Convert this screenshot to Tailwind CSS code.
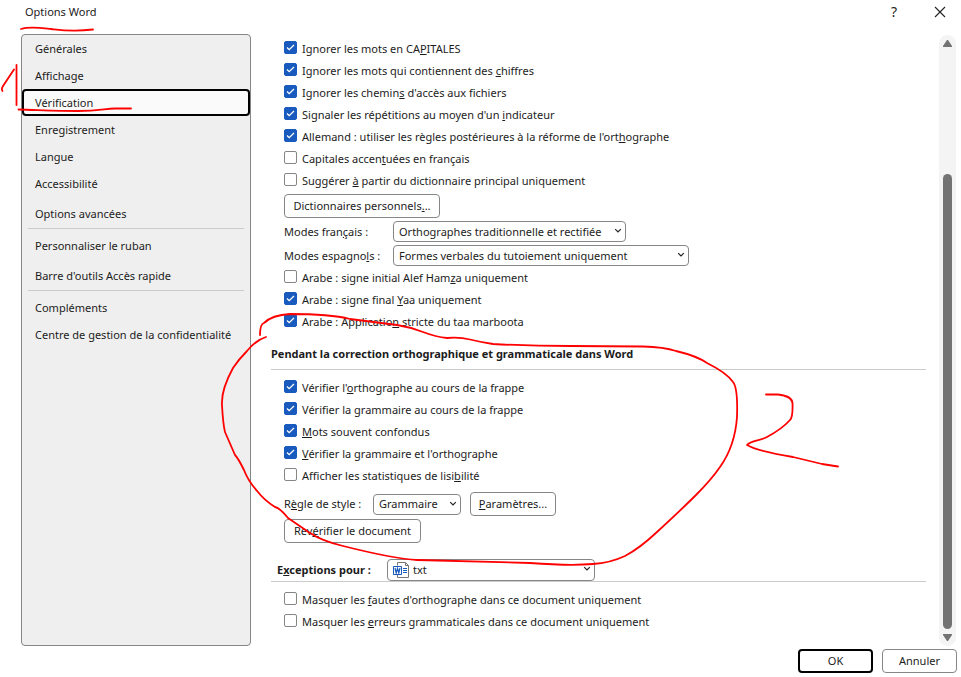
<!DOCTYPE html>
<html lang="fr">
<head>
    <meta charset="UTF-8">
    <meta name="viewport" content="width=device-width, initial-scale=1.0">
    <title>Options Word</title>
    <script src="https://cdn.jsdelivr.net/npm/@tailwindcss/browser@4"></script>
</head>
<body class="relative min-h-screen flex flex-col bg-white font-['Noto_Sans','Open_Sans',sans-serif] text-[11px] leading-4 text-[#1c1c1c]">
    <!-- Barre de titre -->
    <header class="flex items-center justify-between h-6 pl-[25px] pr-[15px] mb-[10px]">
        <h1>Options Word</h1>
        <div class="flex items-center gap-8">
            <button type="button" aria-label="Aide" class="w-4 text-sm">?</button>
            <button type="button" aria-label="Fermer">
                <svg class="w-3 h-3" viewBox="0 0 12 12" fill="none" stroke="#222" stroke-width="1.1"><path d="M1 1l10 10M11 1L1 11"/></svg>
            </button>
        </div>
    </header>

    <main class="flex flex-1 pl-[21px] pr-[5px]">
        <!-- Menu des catégories -->
        <nav class="w-[230px] shrink-0 flex flex-col border border-[#868686] rounded bg-[#efefef]">
            <a href="#" class="h-[27px] px-[13px] flex items-center">Générales</a>
            <a href="#" class="h-[27px] px-[13px] flex items-center">Affichage</a>
            <a href="#" aria-current="page" class="h-[27px] px-[11px] flex items-center bg-[#fafafa] border-2 border-black rounded">Vérification</a>
            <a href="#" class="h-[27px] px-[13px] flex items-center">Enregistrement</a>
            <a href="#" class="h-[27px] px-[13px] flex items-center">Langue</a>
            <a href="#" class="h-[27px] px-[13px] flex items-center">Accessibilité</a>
            <a href="#" class="h-[27px] px-[13px] mt-[3px] flex items-center">Options avancées</a>
            <hr class="mx-[6px] mt-px mb-[3px] border-[#cbcbcb]">
            <a href="#" class="h-[27px] px-[13px] flex items-center">Personnaliser le ruban</a>
            <a href="#" class="h-[27px] px-[13px] mt-[3px] flex items-center">Barre d'outils Accès rapide</a>
            <hr class="mx-[6px] mt-px mb-[3px] border-[#cbcbcb]">
            <a href="#" class="h-[27px] px-[13px] flex items-center">Compléments</a>
            <a href="#" class="h-[27px] px-[13px] flex items-center whitespace-nowrap">Centre de gestion de la confidentialité</a>
        </nav>

        <!-- Options de vérification -->
        <form class="flex-1 pl-5 pr-[13px] pt-[3px] whitespace-nowrap">
            <div class="pl-[13px]">
                <label class="h-[22px] flex items-center gap-[5px]"><span class="grid mb-px"><input type="checkbox" checked class="peer col-start-1 row-start-1 appearance-none size-[13px] rounded-[2px] border border-[#868686] checked:border-[#185abd] checked:bg-[#185abd]"><svg class="hidden peer-checked:block col-start-1 row-start-1 size-[13px] pointer-events-none" viewBox="0 0 13 13" fill="none" stroke="#fff" stroke-width="1.3"><path d="M3 6.5l2.2 2.2L10 4"/></svg></span><span class="pt-[2px]">Ignorer les mots en CA<u>P</u>ITALES</span></label>
                <label class="h-[22px] flex items-center gap-[5px]"><span class="grid mb-px"><input type="checkbox" checked class="peer col-start-1 row-start-1 appearance-none size-[13px] rounded-[2px] border border-[#868686] checked:border-[#185abd] checked:bg-[#185abd]"><svg class="hidden peer-checked:block col-start-1 row-start-1 size-[13px] pointer-events-none" viewBox="0 0 13 13" fill="none" stroke="#fff" stroke-width="1.3"><path d="M3 6.5l2.2 2.2L10 4"/></svg></span><span class="pt-[2px]">Ignorer les mots qui contiennent des <u>c</u>hiffres</span></label>
                <label class="h-[22px] flex items-center gap-[5px]"><span class="grid mb-px"><input type="checkbox" checked class="peer col-start-1 row-start-1 appearance-none size-[13px] rounded-[2px] border border-[#868686] checked:border-[#185abd] checked:bg-[#185abd]"><svg class="hidden peer-checked:block col-start-1 row-start-1 size-[13px] pointer-events-none" viewBox="0 0 13 13" fill="none" stroke="#fff" stroke-width="1.3"><path d="M3 6.5l2.2 2.2L10 4"/></svg></span><span class="pt-[2px]">Ignorer les chemin<u>s</u> d'accès aux fichiers</span></label>
                <label class="h-[22px] flex items-center gap-[5px]"><span class="grid mb-px"><input type="checkbox" checked class="peer col-start-1 row-start-1 appearance-none size-[13px] rounded-[2px] border border-[#868686] checked:border-[#185abd] checked:bg-[#185abd]"><svg class="hidden peer-checked:block col-start-1 row-start-1 size-[13px] pointer-events-none" viewBox="0 0 13 13" fill="none" stroke="#fff" stroke-width="1.3"><path d="M3 6.5l2.2 2.2L10 4"/></svg></span><span class="pt-[2px]">Signaler les répétitions au moyen d'un <u>i</u>ndicateur</span></label>
                <label class="h-[22px] flex items-center gap-[5px]"><span class="grid mb-px"><input type="checkbox" checked class="peer col-start-1 row-start-1 appearance-none size-[13px] rounded-[2px] border border-[#868686] checked:border-[#185abd] checked:bg-[#185abd]"><svg class="hidden peer-checked:block col-start-1 row-start-1 size-[13px] pointer-events-none" viewBox="0 0 13 13" fill="none" stroke="#fff" stroke-width="1.3"><path d="M3 6.5l2.2 2.2L10 4"/></svg></span><span class="pt-[2px]">Allemand : utiliser les règles postérieures à la réforme de l'ort<u>h</u>ographe</span></label>
                <label class="h-[22px] flex items-center gap-[5px]"><span class="grid mb-px"><input type="checkbox" class="peer col-start-1 row-start-1 appearance-none size-[13px] rounded-[2px] border border-[#868686] checked:border-[#185abd] checked:bg-[#185abd]"><svg class="hidden peer-checked:block col-start-1 row-start-1 size-[13px] pointer-events-none" viewBox="0 0 13 13" fill="none" stroke="#fff" stroke-width="1.3"><path d="M3 6.5l2.2 2.2L10 4"/></svg></span><span class="pt-[2px]">Capitales accen<u>t</u>uées en français</span></label>
                <label class="h-[22px] flex items-center gap-[5px]"><span class="grid mb-px"><input type="checkbox" class="peer col-start-1 row-start-1 appearance-none size-[13px] rounded-[2px] border border-[#868686] checked:border-[#185abd] checked:bg-[#185abd]"><svg class="hidden peer-checked:block col-start-1 row-start-1 size-[13px] pointer-events-none" viewBox="0 0 13 13" fill="none" stroke="#fff" stroke-width="1.3"><path d="M3 6.5l2.2 2.2L10 4"/></svg></span><span class="pt-[2px]">Suggérer <u>à</u> partir du dictionnaire principal uniquement</span></label>

                <button type="button" class="block w-[156px] h-6 mt-[3px] border border-[#868686] rounded">Dictionnaires personnels<u>.</u>..</button>

                <div class="flex items-center mt-[3px]">
                    <label for="modes-fr" class="w-[109px]">Modes fran<u>ç</u>ais :</label>
                    <div class="relative">
                        <select id="modes-fr" class="block appearance-none w-[233px] h-[21px] pl-[5px] border border-[#868686] rounded bg-white"><option>Orthographes traditionnelle et rectifiée</option></select>
                        <svg class="absolute right-1 top-[6px] w-2 h-2 pointer-events-none" viewBox="0 0 8 8" fill="none" stroke="#222" stroke-width="1.2"><path d="M1.2 2.2L4 5l2.8-2.8"/></svg>
                    </div>
                </div>
                <div class="flex items-center mt-[3px]">
                    <label for="modes-es" class="w-[109px]">Modes espagno<u>l</u>s :</label>
                    <div class="relative">
                        <select id="modes-es" class="block appearance-none w-[296px] h-[21px] pl-[5px] border border-[#868686] rounded bg-white"><option>Formes verbales du tutoiement uniquement</option></select>
                        <svg class="absolute right-1 top-[6px] w-2 h-2 pointer-events-none" viewBox="0 0 8 8" fill="none" stroke="#222" stroke-width="1.2"><path d="M1.2 2.2L4 5l2.8-2.8"/></svg>
                    </div>
                </div>

                <label class="h-[22px] flex items-center gap-[5px]"><span class="grid mb-px"><input type="checkbox" class="peer col-start-1 row-start-1 appearance-none size-[13px] rounded-[2px] border border-[#868686] checked:border-[#185abd] checked:bg-[#185abd]"><svg class="hidden peer-checked:block col-start-1 row-start-1 size-[13px] pointer-events-none" viewBox="0 0 13 13" fill="none" stroke="#fff" stroke-width="1.3"><path d="M3 6.5l2.2 2.2L10 4"/></svg></span><span class="pt-[2px]">Arabe : signe initial Alef Ham<u>z</u>a uniquement</span></label>
                <label class="h-[22px] flex items-center gap-[5px]"><span class="grid mb-px"><input type="checkbox" checked class="peer col-start-1 row-start-1 appearance-none size-[13px] rounded-[2px] border border-[#868686] checked:border-[#185abd] checked:bg-[#185abd]"><svg class="hidden peer-checked:block col-start-1 row-start-1 size-[13px] pointer-events-none" viewBox="0 0 13 13" fill="none" stroke="#fff" stroke-width="1.3"><path d="M3 6.5l2.2 2.2L10 4"/></svg></span><span class="pt-[2px]">Arabe : signe final <u>Y</u>aa uniquement</span></label>
                <label class="h-[22px] flex items-center gap-[5px]"><span class="grid mb-px"><input type="checkbox" checked class="peer col-start-1 row-start-1 appearance-none size-[13px] rounded-[2px] border border-[#868686] checked:border-[#185abd] checked:bg-[#185abd]"><svg class="hidden peer-checked:block col-start-1 row-start-1 size-[13px] pointer-events-none" viewBox="0 0 13 13" fill="none" stroke="#fff" stroke-width="1.3"><path d="M3 6.5l2.2 2.2L10 4"/></svg></span><span class="pt-[2px]">Arabe : Applicatio<u>n</u> stricte du taa marboota</span></label>
            </div>

            <h2 class="mt-[14px] mb-[6px] pb-[7px] border-b border-[#cbcbcb] font-bold">Pendant la correction orthographique et grammaticale dans Word</h2>

            <div class="pl-[13px]">
                <label class="h-[22px] flex items-center gap-[5px]"><span class="grid mb-px"><input type="checkbox" checked class="peer col-start-1 row-start-1 appearance-none size-[13px] rounded-[2px] border border-[#868686] checked:border-[#185abd] checked:bg-[#185abd]"><svg class="hidden peer-checked:block col-start-1 row-start-1 size-[13px] pointer-events-none" viewBox="0 0 13 13" fill="none" stroke="#fff" stroke-width="1.3"><path d="M3 6.5l2.2 2.2L10 4"/></svg></span><span class="pt-[2px]">Vérifier l'<u>o</u>rthographe au cours de la frappe</span></label>
                <label class="h-[22px] flex items-center gap-[5px]"><span class="grid mb-px"><input type="checkbox" checked class="peer col-start-1 row-start-1 appearance-none size-[13px] rounded-[2px] border border-[#868686] checked:border-[#185abd] checked:bg-[#185abd]"><svg class="hidden peer-checked:block col-start-1 row-start-1 size-[13px] pointer-events-none" viewBox="0 0 13 13" fill="none" stroke="#fff" stroke-width="1.3"><path d="M3 6.5l2.2 2.2L10 4"/></svg></span><span class="pt-[2px]">Vérifier la <u>g</u>rammaire au cours de la frappe</span></label>
                <label class="h-[22px] flex items-center gap-[5px]"><span class="grid mb-px"><input type="checkbox" checked class="peer col-start-1 row-start-1 appearance-none size-[13px] rounded-[2px] border border-[#868686] checked:border-[#185abd] checked:bg-[#185abd]"><svg class="hidden peer-checked:block col-start-1 row-start-1 size-[13px] pointer-events-none" viewBox="0 0 13 13" fill="none" stroke="#fff" stroke-width="1.3"><path d="M3 6.5l2.2 2.2L10 4"/></svg></span><span class="pt-[2px]"><u>M</u>ots souvent confondus</span></label>
                <label class="h-[22px] flex items-center gap-[5px]"><span class="grid mb-px"><input type="checkbox" checked class="peer col-start-1 row-start-1 appearance-none size-[13px] rounded-[2px] border border-[#868686] checked:border-[#185abd] checked:bg-[#185abd]"><svg class="hidden peer-checked:block col-start-1 row-start-1 size-[13px] pointer-events-none" viewBox="0 0 13 13" fill="none" stroke="#fff" stroke-width="1.3"><path d="M3 6.5l2.2 2.2L10 4"/></svg></span><span class="pt-[2px]"><u>V</u>érifier la grammaire et l'orthographe</span></label>
                <label class="h-[22px] flex items-center gap-[5px]"><span class="grid mb-px"><input type="checkbox" class="peer col-start-1 row-start-1 appearance-none size-[13px] rounded-[2px] border border-[#868686] checked:border-[#185abd] checked:bg-[#185abd]"><svg class="hidden peer-checked:block col-start-1 row-start-1 size-[13px] pointer-events-none" viewBox="0 0 13 13" fill="none" stroke="#fff" stroke-width="1.3"><path d="M3 6.5l2.2 2.2L10 4"/></svg></span><span class="pt-[2px]">Afficher les statistiques de lisi<u>b</u>ilité</span></label>

                <div class="flex items-center mt-[6px]">
                    <label for="regle" class="w-[89px]">R<u>è</u>gle de style :</label>
                    <div class="relative">
                        <select id="regle" class="block appearance-none w-[88px] h-[21px] pl-[5px] border border-[#868686] rounded bg-white"><option>Grammaire</option></select>
                        <svg class="absolute right-1 top-[6px] w-2 h-2 pointer-events-none" viewBox="0 0 8 8" fill="none" stroke="#222" stroke-width="1.2"><path d="M1.2 2.2L4 5l2.8-2.8"/></svg>
                    </div>
                    <button type="button" class="w-[86px] h-6 ml-[9px] border border-[#868686] rounded"><u>P</u>aramètres...</button>
                </div>
                <button type="button" class="block w-[137px] h-6 mt-[3px] border border-[#868686] rounded">Rev<u>é</u>rifier le document</button>
            </div>

            <div class="flex items-center mt-4 mb-[6px] pl-[6px] border-b border-[#cbcbcb]">
                <label for="exceptions" class="w-[110px] font-bold">E<u>x</u>ceptions pour :</label>
                <div class="relative">
                    <select id="exceptions" class="block appearance-none w-[208px] h-[22px] pl-[25px] border border-[#868686] rounded bg-white"><option>txt</option></select>
                    <svg class="absolute left-[6px] top-[3px] w-4 h-4 pointer-events-none" viewBox="0 0 16 16" fill="none">
                        <path d="M4.500 3.500V.5h8l3 3v12h-11v-3" fill="#fff" stroke="#767676"/>
                        <path d="M12.500.5v3h3" stroke="#767676"/>
                        <path d="M10 6.500h4M10 8.500h4M10 10.500h4" stroke="#185abd"/>
                        <path d="M.5 4.500h8v8h-8z" fill="#fff" stroke="#185abd"/>
                        <path d="M2 6l1.200 5L4.500 6.500 5.800 11 7 6" stroke="#185abd" stroke-width="1.200"/>
                    </svg>
                    <svg class="absolute right-1 top-[6px] w-2 h-2 pointer-events-none" viewBox="0 0 8 8" fill="none" stroke="#222" stroke-width="1.2"><path d="M1.2 2.2L4 5l2.8-2.8"/></svg>
                </div>
            </div>

            <div class="pl-[13px]">
                <label class="h-[22px] flex items-center gap-[5px]"><span class="grid mb-px"><input type="checkbox" class="peer col-start-1 row-start-1 appearance-none size-[13px] rounded-[2px] border border-[#868686] checked:border-[#185abd] checked:bg-[#185abd]"><svg class="hidden peer-checked:block col-start-1 row-start-1 size-[13px] pointer-events-none" viewBox="0 0 13 13" fill="none" stroke="#fff" stroke-width="1.3"><path d="M3 6.5l2.2 2.2L10 4"/></svg></span><span class="pt-[2px]">Masquer les <u>f</u>autes d'orthographe dans ce document uniquement</span></label>
                <label class="h-[22px] flex items-center gap-[5px]"><span class="grid mb-px"><input type="checkbox" class="peer col-start-1 row-start-1 appearance-none size-[13px] rounded-[2px] border border-[#868686] checked:border-[#185abd] checked:bg-[#185abd]"><svg class="hidden peer-checked:block col-start-1 row-start-1 size-[13px] pointer-events-none" viewBox="0 0 13 13" fill="none" stroke="#fff" stroke-width="1.3"><path d="M3 6.5l2.2 2.2L10 4"/></svg></span><span class="pt-[2px]">Masquer les <u>e</u>rreurs grammaticales dans ce document uniquement</span></label>
            </div>
        </form>

        <!-- Barre de défilement -->
        <div class="w-[17px] flex flex-col items-center py-[5px] mt-px rounded-full bg-[#f4f4f4]">
            <svg class="w-[9px] h-[7px]" viewBox="0 0 9 7" fill="#737373"><path d="M4 0h1l4 6v1H0V6z"/></svg>
            <div class="w-[9px] flex-1 mt-[127px] mb-[5px] rounded-full bg-[#737373]"></div>
            <svg class="w-[9px] h-[7px]" viewBox="0 0 9 7" fill="#737373"><path d="M4 7h1l4-6V0H0v1z"/></svg>
        </div>
    </main>

    <footer class="flex justify-end gap-[9px] pt-[3px] pb-1 pr-1">
        <button type="button" class="w-[75px] h-6 border-2 border-black rounded">OK</button>
        <button type="button" class="w-[75px] h-6 border border-[#868686] rounded">Annuler</button>
    </footer>

    <!-- Annotations à main levée -->
    <svg class="absolute left-0 top-0 w-[961px] h-[677px] pointer-events-none" viewBox="0 0 961 677" fill="none" stroke="#f00" stroke-width="1.8" stroke-linecap="round" stroke-linejoin="round">
        <path d="M21 29C30 26 42 28 51 29S72 32 93 29.500"/>
        <path d="M14 69.500L3 86Q1 89 2.500 91M16.500 65v40"/>
        <path d="M18.500 109.500C38 110 58 111 78 111S104 109 115 108.500L131 108.500"/>
        <path d="M260 335Q260 324 264 323Q272 315 290 314Q330 314 350 319L397 325Q410 327 423 332T447 338Q460 337 470 339.500T493 344Q530 346 570 346L643 346.500Q664 347 676 351Q697 356 707 363Q727 373 733 382Q738 388 737 417Q735 446 720 467Q711 480 696 495Q682 509 657 532Q640 548 625 556Q610 563 593 564Q570 566 530 563L417 560Q395 559 343 546Q322 541 310 533L288 518Q280 508 275 507Q264 500 258 492Q248 481 244 470Q238 458 235 455L225 432Q223 424 222 405Q221 390 233 368Q239 359 247 351Q256 340 266 337"/>
        <path d="M766 394.500H778Q792 396 792.500 403Q793 417 790 420Q782 429 767 437C760 441 751 440 747 445Q757 451 793 457L822 464L838 466.500"/>
    </svg>
</body>
</html>
